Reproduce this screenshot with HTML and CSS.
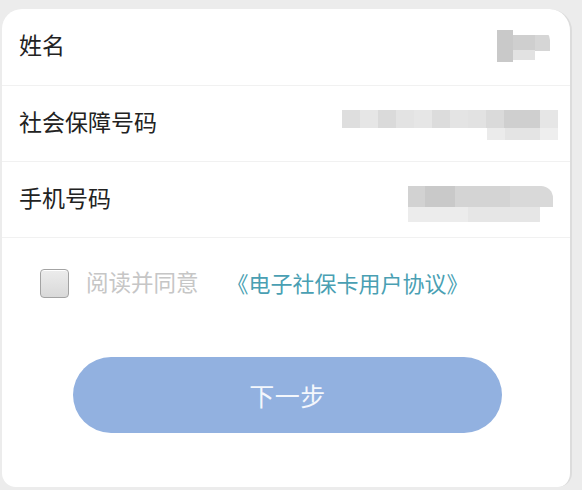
FILE: index.html
```html
<!DOCTYPE html>
<html lang="zh-CN">
<head>
<meta charset="utf-8">
<title>电子社保卡</title>
<link rel="stylesheet" href="styles.css">
</head>
<body>
<div class="card">
  <div class="row">
    <span class="label">姓名</span>
    <span class="value v-name"></span>
  </div>
  <div class="row">
    <span class="label">社会保障号码</span>
    <span class="value v-ssn"></span>
  </div>
  <div class="row">
    <span class="label">手机号码</span>
    <span class="value v-phone"></span>
  </div>
  <div class="agree">
    <span class="checkbox"></span>
    <span class="agree-text">阅读并同意</span>
    <a class="agree-link">《电子社保卡用户协议》</a>
  </div>
  <button class="next">下一步</button>
</div>
</body>
</html>
```

FILE: styles.css
```css
html, body {
  margin: 0;
  padding: 0;
}
body {
  background: #ececec;
  font-family: "Noto Sans CJK SC", "Noto Sans", sans-serif;
  width: 582px;
  height: 490px;
  overflow: hidden;
}
.card {
  margin: 9px 10px 0 2px;
  height: 478px;
  background: #fff;
  border-radius: 20px 22px 14px 14px;
  border-right: 2px solid #dcdcdc;
  display: flex;
  flex-direction: column;
}
.row {
  height: 75px;
  border-bottom: 1px solid #f1f1f1;
  padding: 0 0 0 17px;
  display: flex;
  align-items: center;
  justify-content: space-between;
}
.row:first-child {
  height: 76px;
}
.label {
  font-size: 23px;
  color: #222;
  line-height: 1;
  margin-bottom: 5px;
}
.value {
  display: block;
  filter: blur(0.7px);
}
.v-name {
  width: 53px;
  height: 32px;
  margin-right: 20px;
  margin-bottom: 3px;
  background:
    linear-gradient(#c9c9c9, #c9c9c9) 0 0 / 16px 32px no-repeat,
    linear-gradient(#e2e2e2, #e2e2e2) 16px 20px / 22px 10px no-repeat,
    linear-gradient(90deg, #cfcfcf 0 22px, #d6d6d6 22px 37px) 16px 5px / 37px 16px no-repeat;
  border-radius: 0 10px 10px 0;
}
.v-ssn {
  width: 216px;
  height: 30px;
  margin-right: 12px;
  margin-top: 2px;
  background:
    linear-gradient(90deg, #ebebeb 0 18px, #e4e4e4 18px 53px, #eeeeee 53px 71px) 145px 18px / 71px 12px no-repeat,
    linear-gradient(90deg,
      #dedede 0 18px, #e6e6e6 18px 36px, #dadada 36px 54px, #e3e3e3 54px 72px,
      #e6e6e6 72px 90px, #dcdcdc 90px 108px, #e4e4e4 108px 126px, #e2e2e2 126px 144px,
      #dadada 144px 162px, #cfcfcf 162px 198px, #e6e6e6 198px 216px) 0 0 / 216px 18px no-repeat;
}
.v-phone {
  width: 145px;
  height: 36px;
  margin-right: 17px;
  margin-top: 8px;
  background:
    linear-gradient(90deg, #ececec 0 60px, #e6e6e6 60px 132px) 0 21px / 132px 15px no-repeat,
    linear-gradient(90deg, #d2d2d2 0 17px, #c9c9c9 17px 47px, #d4d4d4 47px 102px, #d9d9d9 102px 145px) 0 0 / 145px 21px no-repeat;
  border-radius: 0 12px 14px 0;
}
.agree {
  display: flex;
  align-items: center;
  margin-top: 30px;
  padding-left: 38px;
  height: 31px;
}
.checkbox {
  width: 27px;
  height: 27px;
  border: 1px solid #a3a3a3;
  border-radius: 4px;
  background: linear-gradient(#ececec, #d9d9d9);
  box-shadow: inset 0 1px 0 #fff;
}
.agree-text {
  margin-left: 17px;
  margin-bottom: 4px;
  font-size: 22.5px;
  color: #c6c6c6;
  line-height: 1;
}
.agree-link {
  margin-left: 28px;
  margin-bottom: 4px;
  font-size: 22px;
  color: #4a9fb3;
  line-height: 1;
}
.next {
  margin: 58px 0 0 71px;
  width: 429px;
  height: 76px;
  border: none;
  border-radius: 38px;
  background: #92b1e0;
  color: #f4f7fc;
  font-family: "Noto Sans CJK SC", "Noto Sans", sans-serif;
  font-size: 25px;
  padding: 0;
  letter-spacing: 0.5px;
}
```
